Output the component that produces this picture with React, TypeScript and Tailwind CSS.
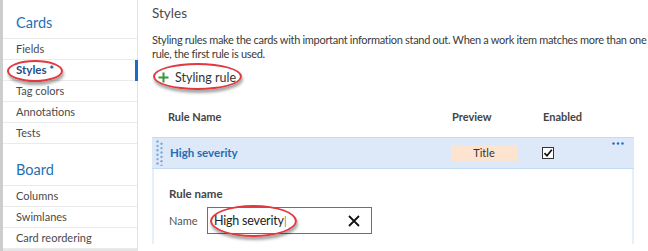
import React from "react";

const font = { fontFamily: 'Lato, "Segoe UI", "Noto Sans", sans-serif' };

function Ellipse({ className }: { className: string }) {
  return (
    <div
      className={
        "pointer-events-none absolute rounded-[50%] border-2 border-[#e0393e] shadow-[1px_3px_3px_rgba(0,0,0,0.35)] " +
        className
      }
    />
  );
}

function SideRow({ label, selected }: { label: string; selected?: boolean }) {
  return (
    <div className="relative flex h-[21px] items-center border-b border-[#ebebeb] pl-[13px]">
      <span
        className={
          selected
            ? "text-[11.5px] font-bold leading-[16px] text-[#1b4f8e]"
            : "text-[11px] leading-[16px] text-[#4a4a4a]"
        }
      >
        {label}
      </span>
      {selected && <div className="absolute right-[-1px] top-0 h-[21px] w-[3px] bg-[#1a6dc6]" />}
    </div>
  );
}

function DragDots() {
  const dots: [number, number][] = [];
  for (let i = 0; i < 6; i++) {
    dots.push([1.5, 1.5 + i * 4.4]);
    dots.push([5.5, 3.7 + i * 4.4]);
  }
  return (
    <svg width="8" height="26" viewBox="0 0 8 26">
      {dots.map(([x, y], i) => (
        <circle key={i} cx={x} cy={y} r="1.2" fill="#7fa9d8" />
      ))}
    </svg>
  );
}

export default function App() {
  return (
    <div className="relative flex h-[251px] w-[648px] overflow-hidden bg-white" style={font}>
      <div className="w-[3px] shrink-0 bg-[#cdcdcd]" />
      <div className="flex w-[135px] shrink-0 flex-col border-r border-[#e2e2e2]">
        <div className="flex h-[39px] items-end border-b border-[#ebebeb] pb-[5px] pl-[13px]">
          <span className="text-[14.5px] leading-[20px] text-[#1f6fb5]">Cards</span>
        </div>
        <SideRow label="Fields" />
        <SideRow label="Styles *" selected />
        <SideRow label="Tag colors" />
        <SideRow label="Annotations" />
        <SideRow label="Tests" />
        <div className="flex h-[42px] items-end border-b border-[#ebebeb] pb-[5px] pl-[13px]">
          <span className="text-[14.5px] leading-[20px] text-[#1f6fb5]">Board</span>
        </div>
        <SideRow label="Columns" />
        <SideRow label="Swimlanes" />
        <SideRow label="Card reordering" />
        <div className="flex-1 bg-[#e6e6e6]" />
      </div>

      <div className="flex min-w-0 flex-1 flex-col pl-[14px] pr-[13px]">
        <div className="pt-[5px] text-[13.5px] leading-[17px] text-[#4a4a4a]">Styles</div>
        <div className="mt-[11px] whitespace-nowrap text-[11px] leading-[14px] tracking-[-0.3px] text-[#3a3a3a]">
          Styling rules make the cards with important information stand out. When a work item matches more than one
          <br />
          rule, the first rule is used.
        </div>
        <div className="mt-[7px] flex h-[19px] items-center gap-[6px] pl-[6px]">
          <svg width="11" height="11" viewBox="0 0 11 11">
            <path d="M5.5 0.5 V10.5 M0.5 5.5 H10.5" stroke="#359a3c" strokeWidth="2" />
          </svg>
          <span className="text-[12.5px] leading-[19px] text-[#333]">Styling rule</span>
        </div>

        <div className="mt-[22px] grid grid-cols-[299px_90px_1fr] text-[11px] font-bold leading-[16px] text-[#444]">
          <div className="pl-[16px]">Rule Name</div>
          <div className="pl-[1px]">Preview</div>
          <div className="pl-[2px]">Enabled</div>
        </div>

        <div className="mt-[12px] w-[482px]">
          <div className="relative grid h-[32px] grid-cols-[299px_90px_1fr] items-center border-y border-[#c5daf3] bg-[#dde9f8]">
            <div className="flex items-center gap-[6px] pl-[4px]">
              <DragDots />
              <span className="text-[11.5px] font-bold leading-[16px] text-[#1f6db5]">High severity</span>
            </div>
            <div>
              <div className="flex h-[16px] w-[66px] items-center justify-center bg-[#fde4d0] text-[11px] leading-[16px] text-[#333]">
                Title
              </div>
            </div>
            <div className="pl-[1px]">
              <div className="flex h-[12px] w-[12px] items-center justify-center border border-[#333] bg-white">
                <svg width="10" height="10" viewBox="0 0 10 10">
                  <path d="M1.5 5.2 L4 7.8 L8.8 1.8" stroke="#111" strokeWidth="1.7" fill="none" />
                </svg>
              </div>
            </div>
            <svg className="absolute right-[10px] top-[4px]" width="12" height="3" viewBox="0 0 12 3">
              <circle cx="1.5" cy="1.5" r="1.2" fill="#1f6db5" />
              <circle cx="6" cy="1.5" r="1.2" fill="#1f6db5" />
              <circle cx="10.5" cy="1.5" r="1.2" fill="#1f6db5" />
            </svg>
          </div>
          <div className="h-[75px] border-x-2 border-[#e6f0fb] pl-[15px] pt-[17px]">
            <div className="text-[11.5px] font-bold leading-[16px] text-[#444]">Rule name</div>
            <div className="mt-[5px] flex items-center">
              <span className="w-[38px] text-[11px] leading-[16px] text-[#555]">Name</span>
              <div className="flex h-[27px] w-[165px] items-center justify-between border border-[#2b7fd4] pl-[6px] pr-[10px]">
                <span className="text-[12.5px] leading-[18px] tracking-[-0.2px] text-[#222]">
                  High severity<span className="font-light">|</span>
                </span>
                <svg width="14" height="14" viewBox="0 0 14 14">
                  <path d="M2 2 L12 12 M12 2 L2 12" stroke="#111" strokeWidth="1.8" />
                </svg>
              </div>
            </div>
          </div>
        </div>
      </div>

      <Ellipse className="left-[7px] top-[60px] h-[22px] w-[56px]" />
      <Ellipse className="left-[153px] top-[63px] h-[27px] w-[89px]" />
      <Ellipse className="left-[210px] top-[205px] h-[32px] w-[87px]" />
    </div>
  );
}
